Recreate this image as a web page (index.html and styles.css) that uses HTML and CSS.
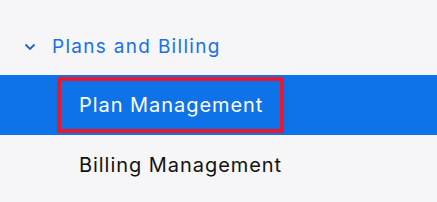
FILE: index.html
```html
<!DOCTYPE html>
<html lang="en">
<head>
    <meta charset="UTF-8">
    <title>Plans and Billing</title>
    <link rel="stylesheet" href="styles.css">
</head>
<body>
    <nav class="sidebar">
        <div class="group-header">
            <svg class="chevron" width="12" height="8" viewBox="0 0 12 8">
                <path d="M1.5 1.5 L6 6 L10.5 1.5" fill="none" stroke="#2160c4" stroke-width="1.8"/>
            </svg>
            <span class="group-title">Plans and Billing</span>
        </div>
        <ul class="menu">
            <li class="menu-item active">
                <a href="#" class="menu-link">Plan Management</a>
            </li>
            <li class="menu-item">
                <a href="#" class="menu-link">Billing Management</a>
            </li>
        </ul>
    </nav>
</body>
</html>
```

FILE: styles.css
```css
/* Page */
body {
    margin: 0;
    background-color: #f6f6f8;
    font-family: 'Inter', 'Liberation Sans', Arial, sans-serif;
}

.sidebar {
    width: 437px;
    padding-top: 28px;
}

/* Group header */
.group-header {
    display: flex;
    align-items: center;
    height: 36px;
    padding-left: 24px;
    margin-bottom: 11px;
}

.chevron {
    margin-right: 16px;
    margin-top: 2px;
}

.group-title {
    font-size: 19px;
    letter-spacing: 1.3px;
    color: #1a6fe8;
}

/* Menu items */
.menu {
    list-style: none;
    margin: 0;
    padding: 0;
}

.menu-item {
    display: flex;
    align-items: center;
    height: 60px;
    padding-left: 57px;
}

.menu-link {
    display: block;
    padding: 13px 17px 13px 18px;
    line-height: 22px;
    border: 4px solid transparent;
    font-size: 20px;
    letter-spacing: 0.95px;
    color: #111;
    text-decoration: none;
}

.menu-item.active {
    background-color: #0e72e8;
}

.menu-item.active .menu-link {
    color: #fff;
    border-color: #e8192c;
}
```
